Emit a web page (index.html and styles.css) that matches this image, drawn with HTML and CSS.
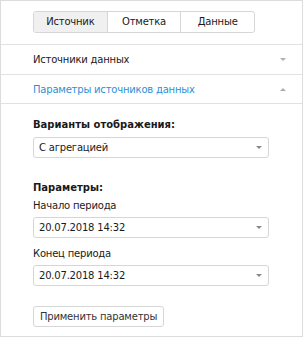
FILE: index.html
```html
<!DOCTYPE html>
<html>
    <head>
        <link rel="stylesheet" href="styles.css">
    </head>
    <body>
        <div class="panel">
            <div class="tabsBar">
                <div class="tabs">
                    <span class="tab active">Источник</span>
                    <span class="tab">Отметка</span>
                    <span class="tab">Данные</span>
                </div>
            </div>
            <div class="section first">
                <span>Источники данных</span>
                <i class="arrowDown"></i>
            </div>
            <div class="section open">
                <span>Параметры источников данных</span>
                <i class="arrowUp"></i>
            </div>
            <div class="body">
                <div class="label bold">Варианты отображения:</div>
                <div class="select s1"><span>С агрегацией</span><i class="arrowDown"></i></div>

                <div class="label bold params">Параметры:</div>
                <div class="label start">Начало периода</div>
                <div class="select"><span>20.07.2018 14:32</span><i class="arrowDown"></i></div>
                <div class="label end">Конец периода</div>
                <div class="select"><span>20.07.2018 14:32</span><i class="arrowDown"></i></div>

                <div class="btn">Применить параметры</div>
            </div>
        </div>
    </body>
</html>
```

FILE: styles.css
```css
*{
    padding: 0;
    margin: 0;
    box-sizing: border-box;
}
body{
    font-family: "DejaVu Sans", Verdana, sans-serif;
    font-size: 10px;
    letter-spacing: -0.2px;
    color: #1a1a1a;
    background: #fff;
}
.panel{
    width: 303px;
    height: 337px;
    border: 1px solid #dcdcdc;
}
.tabsBar{
    height: 44px;
    padding: 10px 0 0 32px;
    border-bottom: 1px solid #e2e2e2;
}
.tabs{
    display: flex;
    width: 222px;
    height: 22px;
    border: 1px solid #d6d6d6;
    border-radius: 3px;
    overflow: hidden;
}
.tab{
    flex: 1;
    text-align: center;
    line-height: 20px;
    border-left: 1px solid #d6d6d6;
}
.tab:first-child{
    border-left: none;
}
.tab.active{
    background: #f0f0f0;
}
.section{
    height: 29px;
    display: flex;
    align-items: center;
    justify-content: space-between;
    padding: 0 16px 0 32px;
    border-bottom: 1px solid #e2e2e2;
}
.section.first{
    height: 30px;
}
.section.open{
    color: #2b8fd8;
}
.arrowDown, .arrowUp{
    width: 0;
    height: 0;
    border-left: 3px solid transparent;
    border-right: 3px solid transparent;
}
.arrowDown{
    border-top: 3px solid #8a8a8a;
}
.arrowUp{
    border-bottom: 3px solid #b0b0b0;
}
.section .arrowDown{
    border-top-color: #b0b0b0;
}
.body{
    display: flex;
    flex-direction: column;
    align-items: flex-start;
    padding: 13px 0 0 32px;
}
.label{
    line-height: 16px;
}
.bold{
    font-weight: bold;
    letter-spacing: 0;
}
.params{
    margin-top: 22px;
}
.start{
    margin-top: 2px;
}
.end{
    margin-top: 8px;
}
.select{
    width: 236px;
    height: 21px;
    margin-top: 3px;
    display: flex;
    align-items: center;
    justify-content: space-between;
    padding: 0 6px 0 5px;
    border: 1px solid #d6d6d6;
    border-radius: 3px;
}
.select.s1{
    margin-top: 4px;
}
.btn{
    margin-top: 20px;
    height: 21px;
    line-height: 19px;
    padding: 0 6px;
    border: 1px solid #d6d6d6;
    border-radius: 3px;
    color: #333;
}
```
